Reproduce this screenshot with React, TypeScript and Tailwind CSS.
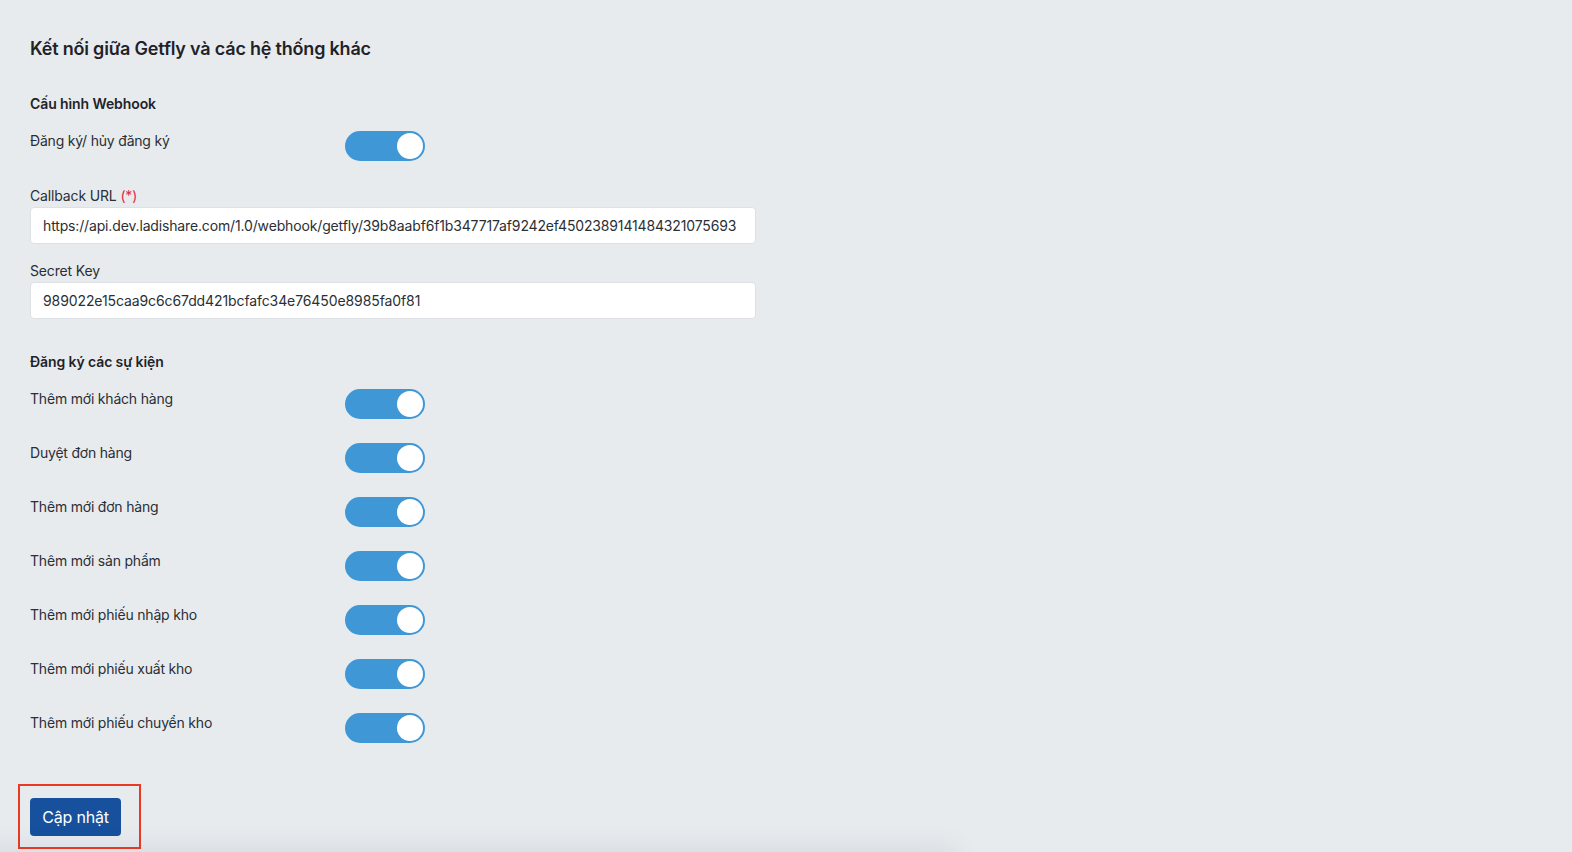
import React from "react";

function Toggle() {
  return (
    <div className="relative h-[30px] w-[80px] shrink-0 rounded-full bg-[#3f97d6]">
      <div className="absolute right-[2px] top-[2px] h-[26px] w-[26px] rounded-full bg-white" />
    </div>
  );
}

function Row({ label }: { label: string }) {
  return (
    <div className="flex items-start">
      <div className="w-[315px] text-[14px] leading-[20px] tracking-[-0.2px] text-[#2a2f36]">{label}</div>
      <Toggle />
    </div>
  );
}

export default function App() {
  const events = [
    "Thêm mới khách hàng",
    "Duyệt đơn hàng",
    "Thêm mới đơn hàng",
    "Thêm mới sản phẩm",
    "Thêm mới phiếu nhập kho",
    "Thêm mới phiếu xuất kho",
    "Thêm mới phiếu chuyển kho",
  ];
  return (
    <div
      className="relative h-[852px] w-full overflow-hidden bg-[#e8ebee] text-[#1f2328]"
      style={{ fontFamily: "Inter, 'Noto Sans', sans-serif" }}
    >
      <div className="px-[30px] pt-[37px]">
        <h1 className="text-[18px] font-semibold leading-[24px] tracking-[-0.2px] text-[#1f2328]">
          Kết nối giữa Getfly và các hệ thống khác
        </h1>

        <div className="mt-[33px] text-[14px] font-semibold leading-[20px] tracking-[-0.1px]">Cấu hình Webhook</div>
        <div className="mt-[17px]">
          <Row label="Đăng ký/ hủy đăng ký" />
        </div>

        <div className="mt-[25px] text-[14px] leading-[20px] tracking-[-0.15px] text-[#2a2f36]">
          Callback URL <span className="text-[#e0284a]">(*)</span>
        </div>
        <div className="mt-px flex h-[37px] w-[726px] items-center rounded-[4px] border border-[#dde1e5] bg-white px-[12px] text-[14px] tracking-[-0.15px] text-[#2a2f36]">
          https://api.dev.ladishare.com/1.0/webhook/getfly/39b8aabf6f1b347717af9242ef4502389141484321075693
        </div>

        <div className="mt-[17px] text-[14px] leading-[20px] tracking-[-0.15px] text-[#2a2f36]">Secret Key</div>
        <div className="mt-px flex h-[37px] w-[726px] items-center rounded-[4px] border border-[#dde1e5] bg-white px-[12px] text-[14px] tracking-[-0.1px] text-[#2a2f36]">
          989022e15caa9c6c67dd421bcfafc34e76450e8985fa0f81
        </div>

        <div className="mt-[33px] text-[14px] font-semibold leading-[20px] tracking-[-0.1px]">Đăng ký các sự kiện</div>
        <div className="mt-[17px] flex flex-col gap-[24px]">
          {events.map((e) => (
            <Row key={e} label={e} />
          ))}
        </div>

        <div className="relative mt-[55px] inline-block">
          <button className="h-[38px] w-[91px] rounded-[4px] bg-[#17509d] text-[16px] leading-[20px] tracking-[-0.2px] text-white">
            Cập nhật
          </button>
          <div className="pointer-events-none absolute left-[-12px] top-[-14px] h-[65px] w-[123px] border-[2.5px] border-[#ea3a24]" />
        </div>
      </div>
      <div className="pointer-events-none absolute bottom-[-30px] left-[-20px] h-[30px] w-[980px] rounded-full shadow-[0_-6px_24px_rgba(60,70,90,0.09)]" />
    </div>
  );
}
